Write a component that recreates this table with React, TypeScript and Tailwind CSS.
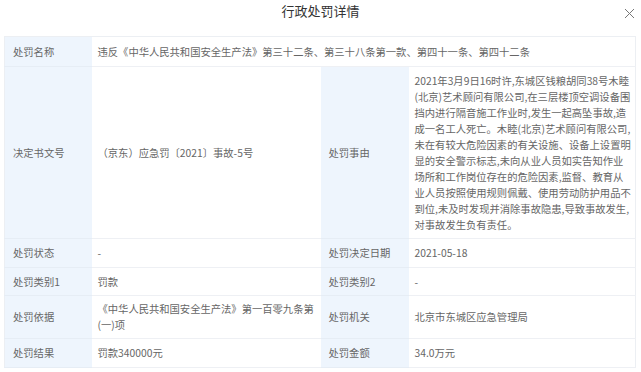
import React from 'react';

const reasonLines = [
  '2021年3月9日16时许,东城区钱粮胡同38号木睦',
  '(北京)艺术顾问有限公司,在三层楼顶空调设备围',
  '挡内进行隔音施工作业时,发生一起高坠事故,造',
  '成一名工人死亡。木睦(北京)艺术顾问有限公司,',
  '未在有较大危险因素的有关设施、设备上设置明',
  '显的安全警示标志,未向从业人员如实告知作业',
  '场所和工作岗位存在的危险因素,监督、教育从',
  '业人员按照使用规则佩戴、使用劳动防护用品不',
  '到位,未及时发现并消除事故隐患,导致事故发生,',
  '对事故发生负有责任。',
];

const Label: React.FC<{ children: React.ReactNode }> = ({ children }) => (
  <td className="bg-[#eef5fd] pl-2 pr-1 align-middle border-b border-[#e6edf5] text-[#666]">{children}</td>
);

const Value: React.FC<{ children: React.ReactNode; colSpan?: number }> = ({ children, colSpan }) => (
  <td colSpan={colSpan} className="bg-white px-[6px] align-middle border-b border-[#eef0f4] text-[#666]">
    {children}
  </td>
);

const App: React.FC = () => {
  return (
    <div
      className="w-[641px] h-[372px] bg-white overflow-hidden"
      style={{ fontFamily: '"Noto Sans CJK SC", "Noto Sans", sans-serif' }}
    >
      <div className="relative h-[36px] flex items-start justify-center pt-[2px]">
        <span className="text-[13px] leading-[18px] text-[#333]">行政处罚详情</span>
        <svg className="absolute right-[6px] top-[8px]" width="11" height="11" viewBox="0 0 11 11">
          <path d="M1 1L10 10M10 1L1 10" stroke="#777" strokeWidth="1" />
        </svg>
      </div>
      <div className="pl-[4px]">
        <table className="w-[631px] table-fixed border-collapse text-[10.3px] leading-[16px] border border-[#eceff3]">
          <colgroup>
            <col className="w-[87px]" />
            <col className="w-[229px]" />
            <col className="w-[88px]" />
            <col className="w-[227px]" />
          </colgroup>
          <tbody>
            <tr className="h-[30px]">
              <Label>处罚名称</Label>
              <Value colSpan={3}>违反《中华人民共和国安全生产法》第三十二条、第三十八条第一款、第四十一条、第四十二条</Value>
            </tr>
            <tr className="h-[172px]">
              <Label>决定书文号</Label>
              <Value>（京东）应急罚〔2021〕事故-5号</Value>
              <Label>处罚事由</Label>
              <Value>
                <div className="py-[5px]">
                  {reasonLines.map((l, i) => (
                    <div key={i} className="whitespace-nowrap">{l}</div>
                  ))}
                </div>
              </Value>
            </tr>
            <tr className="h-[29px]">
              <Label>处罚状态</Label>
              <Value>-</Value>
              <Label>处罚决定日期</Label>
              <Value>2021-05-18</Value>
            </tr>
            <tr className="h-[28px]">
              <Label>处罚类别1</Label>
              <Value>罚款</Value>
              <Label>处罚类别2</Label>
              <Value>-</Value>
            </tr>
            <tr className="h-[43px]">
              <Label>处罚依据</Label>
              <Value>
                <div className="whitespace-nowrap">《中华人民共和国安全生产法》第一百零九条第</div>
                <div>(一)项</div>
              </Value>
              <Label>处罚机关</Label>
              <Value>北京市东城区应急管理局</Value>
            </tr>
            <tr className="h-[29px]">
              <Label>处罚结果</Label>
              <Value>罚款340000元</Value>
              <Label>处罚金额</Label>
              <Value>34.0万元</Value>
            </tr>
          </tbody>
        </table>
      </div>
    </div>
  );
};

export default App;
